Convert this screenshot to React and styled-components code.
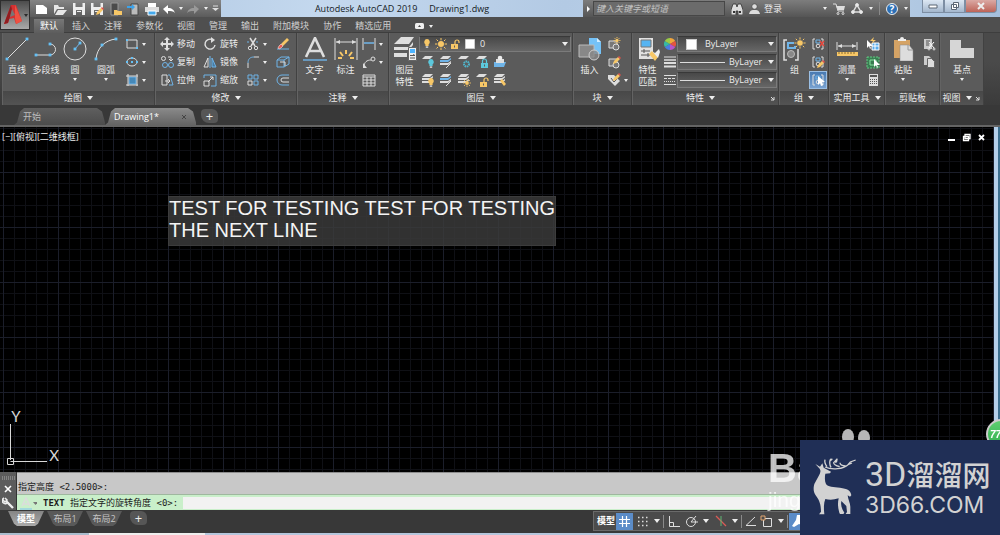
import React from "react";
import styled, { createGlobalStyle, css } from "styled-components";

const GlobalStyle = createGlobalStyle`
  * {
    box-sizing: border-box;
  }

  body {
    margin: 0;
    overflow: hidden;
    background: #383838;
    color: #ececec;
    font: 9px/12px "Open Sans", "Noto Sans CJK SC", sans-serif;
  }

  button,
  input,
  select,
  textarea {
    margin: 0;
    padding: 0;
    border: 0;
    background: none;
    color: inherit;
    font: inherit;
  }

  svg {
    display: block;
    flex: none;
  }
`;

const W = "#dedede";
const B = "#6fb4e8";
const Y = "#f7c767";

const Shell = styled.div`
  display: flex;
  flex-direction: column;
  height: 100vh;
`;

/* ---------- header ---------- */

const Header = styled.header`
  display: flex;
  height: 33px;
  background: #4f4f4f;
  border-bottom: 1px solid #3e3e3e;
`;

const AppButton = styled.button`
  display: flex;
  align-items: center;
  gap: 1px;
  width: 30px;
  height: 30px;
  padding-left: 2px;
  border: 1px solid #2e2e2e;
  background: linear-gradient(#4c4c4c, #a9a9a9);
`;

const HeaderMain = styled.div`
  flex: 1;
  min-width: 0;
`;

const TitleBar = styled.div`
  display: flex;
  height: 17px;
  background: linear-gradient(100deg, #a9c3de, #c4d8ee 30%, #b3cae4 55%, #bfd4ea 80%, #a5bfdc);
`;

const QuickAccess = styled.div`
  display: flex;
  align-items: center;
  justify-content: space-between;
  width: 191px;
  padding: 0 2px 0 5px;
  background: linear-gradient(#858585, #5b5b5b);
`;

const IconButton = styled.button`
  display: flex;
  align-items: center;
  justify-content: center;
  height: 16px;
`;

const Title = styled.h1`
  display: flex;
  flex: 1;
  justify-content: center;
  gap: 12px;
  margin: 0;
  color: #141a24;
  font-size: 9px;
  font-weight: 400;
  line-height: 17px;
  white-space: nowrap;
`;

const InfoCenter = styled.div`
  display: flex;
  align-items: center;
  gap: 6px;
  width: 327px;
  padding-right: 2px;
  background: linear-gradient(#7d7d7d, #555);
`;

const Search = styled.div`
  display: flex;
  align-items: center;
  height: 17px;

  button {
    display: flex;
    justify-content: center;
    width: 10px;
  }

  input {
    width: 132px;
    height: 15px;
    padding-left: 2px;
    background: #6b6b6b;
    border: 1px solid #474747;
    font-style: italic;
  }

  input::placeholder {
    color: #c4c4c4;
    opacity: 1;
  }
`;

const SignIn = styled.button`
  display: flex;
  align-items: center;
  flex: 1;
  gap: 4px;
`;

const Divider = styled.span`
  width: 1px;
  height: 13px;
  background: #8a8a8a;
`;

const WindowButtons = styled.div`
  display: flex;
  width: 90px;
  padding: 0 3px 4px 12px;

  button {
    display: flex;
    align-items: center;
    justify-content: center;
    flex: 2;
    border: 1px solid #7d8ea3;
    border-top: 0;
    background: linear-gradient(#dce7f3, #a4b7cd);
  }

  button:last-child {
    flex: 3;
    border-radius: 0 0 4px 0;
    background: linear-gradient(#dba9a4, #bd6459);
  }
`;

const RibbonTabs = styled.nav`
  display: flex;
  height: 16px;
  padding: 2px 0 0 4px;
`;

const RibbonTab = styled.button`
  height: 14px;
  padding: 0 6px;
  margin-right: 2px;
  color: #d0d0d0;
  line-height: 12px;

  ${props =>
    props.$active &&
    css`
      background: linear-gradient(#777, #5d5d5d);
      color: #fff;
    `}
`;

const TabToggle = styled.button`
  display: flex;
  align-items: center;
  gap: 5px;
  margin-left: 16px;
`;

/* ---------- ribbon ---------- */

const Ribbon = styled.div`
  display: flex;
  height: 72px;
  padding-left: 2px;
  background: linear-gradient(#4a4a4a 40%, #3b3b3b);
`;

const PanelBox = styled.section`
  display: flex;
  flex-direction: column;
  flex: none;
  width: ${props => props.$width}px;
  border-right: 1px solid #414141;
  border-left: 1px solid #636363;
  background: #5b5b5b;
`;

const PanelBody = styled.div`
  display: flex;
  flex: 1;
  padding-top: 2px;
`;

const PanelTitle = styled.button`
  display: flex;
  align-items: center;
  justify-content: center;
  position: relative;
  gap: 5px;
  height: 14px;
  padding-right: ${props => (props.$launch ? 10 : 0)}px;
  background: linear-gradient(#484848, #535353);
  white-space: nowrap;
`;

const Launcher = styled.span`
  position: absolute;
  right: 3px;
`;

const Caret = styled.span`
  flex: none;
  width: 0;
  height: 0;
  border: ${props => props.$size || 2}px solid transparent;
  border-top: ${props => (props.$size || 2) + 1}px solid ${props => (props.$dark ? "#2b2b2b" : "#eee")};
  border-bottom: 0;
`;

const LargeButton = styled.button`
  display: flex;
  flex-direction: column;
  align-items: center;
  width: ${props => props.$width}px;
  height: 54px;
  padding-top: 2px;
  line-height: 12px;
  white-space: nowrap;

  svg {
    margin-bottom: 3px;
  }

  ${Caret} {
    margin-top: 2px;
  }
`;

const Column = styled.div`
  display: flex;
  flex-direction: column;
  flex: none;
  ${props => props.$width && `width: ${props.$width}px;`}
`;

const SmallButton = styled.button`
  display: flex;
  align-items: center;
  gap: 3px;
  height: 18px;
  padding: 0 2px;
  white-space: nowrap;

  ${props =>
    props.$pressed &&
    css`
      background: linear-gradient(#4678b0, #7ba4d2);
      outline: 1px solid #9bbfe4;
      outline-offset: -1px;
    `}
`;

const FieldArea = styled.div`
  display: flex;
  flex-direction: column;
  flex: 1;
  min-width: 0;
`;

const LayerRow = styled.div`
  display: flex;
`;

const Combo = styled.label`
  display: flex;
  align-items: center;
  gap: 4px;
  height: 16px;
  margin: 1px 1px 1px 0;
  padding: 0 2px;
  border: 1px solid #7b7b7b;
  border-top-color: #393939;
  background: linear-gradient(#484848, #666);

  select {
    flex: 1;
    min-width: 0;
    appearance: none;
    line-height: 14px;
  }
`;

const Swatch = styled.span`
  width: 11px;
  height: 11px;
  margin: 0 4px 0 6px;
  border: 1px solid #ccc;
  background: #fff;
`;

const Weight = styled.span`
  width: 45px;
  height: 1px;
  background: #ddd;
`;

/* ---------- file tabs ---------- */

const FileTabs = styled.nav`
  display: flex;
  align-items: flex-end;
  height: 22px;
  padding-left: 14px;
  border-bottom: 2px solid #646464;
  background: #383838;
`;

const FileTab = styled.button`
  display: flex;
  align-items: center;
  justify-content: space-between;
  width: 91px;
  height: 17px;
  padding: 0 9px;
  color: ${props => (props.$active ? "#fff" : "#bdbdbd")};
  background: ${props =>
    props.$active ? "linear-gradient(#8a8a8a, #646464)" : "linear-gradient(#5f5f5f, #4c4c4c)"};
  clip-path: polygon(
    0 100%, 3px 85%, 6px 20%, 10px 0,
    calc(100% - 8px) 0, calc(100% - 3px) 20%, 100% 85%, 100% 100%
  );
`;

const AddTab = styled.button`
  width: 17px;
  height: 14px;
  margin: 0 0 2px 5px;
  border-radius: 4px 6px 4px 8px;
  background: #565656;
  font-size: 13px;
  line-height: 12px;
`;

/* ---------- drawing area ---------- */

const Workspace = styled.main`
  display: flex;
  flex: 1;
  min-height: 0;
`;

const Canvas = styled.div`
  position: relative;
  flex: 1;
  background-color: #000;
  background-image:
    linear-gradient(90deg, #1b1e2a 1px, transparent 1px),
    linear-gradient(#1b1e2a 1px, transparent 1px),
    linear-gradient(90deg, #0f1015 1px, transparent 1px),
    linear-gradient(#0f1015 1px, transparent 1px);
  background-size: 55px 55px, 55px 55px, 11px 11px, 11px 11px;
  background-position: 3px 45px, 3px 45px, 3px 1px, 3px 1px;
`;

const CanvasEdge = styled.div`
  width: 6px;
  border-left: 4px solid #b4cfea;
  background: #3c6f8f;
`;

const ViewLabel = styled.div`
  padding: 4px 2px;
`;

const ViewButtons = styled.div`
  display: flex;
  align-items: center;
  gap: 5px;
  position: absolute;
  top: 6px;
  right: 7px;

  button {
    width: 10px;
  }
`;

const TextEditor = styled.textarea`
  position: absolute;
  left: 168px;
  top: 69px;
  width: 388px;
  height: 50px;
  border: 1px solid #3c3c3c;
  background: rgba(60, 60, 60, 0.82);
  color: #f4f4f4;
  font: 20px/22px "Liberation Sans", sans-serif;
  white-space: pre;
  overflow: hidden;
  resize: none;
`;

const Ucs = styled.svg`
  position: absolute;
  left: 4px;
  bottom: 5px;
`;

/* ---------- command line ---------- */

const CommandLine = styled.section`
  display: flex;
  height: 38px;
  color: #1c1c1c;
  font-family: "DejaVu Sans Mono", "Noto Sans CJK SC", monospace;
`;

const CommandTools = styled.div`
  display: flex;
  flex-direction: column;
  align-items: center;
  justify-content: space-between;
  width: 17px;
  padding: 4px 0 1px;
  border-right: 1px solid #333;
  background: #5c5c5c;
`;

const CommandBody = styled.div`
  flex: 1;
  background: #c8c8c8;
  border-top: 1px solid #8d8d8d;
`;

const History = styled.div`
  height: 21px;
  padding: 8px 1px 0;
`;

const Prompt = styled.label`
  display: flex;
  align-items: center;
  height: 16px;
  border-top: 1px solid #9fb79f;
  background: #c9efca;

  span {
    padding: 0 5px 0 6px;
  }

  input {
    flex: 1;
    height: 12px;
    background: #f2f2f2;
  }
`;

/* ---------- bottom bar ---------- */

const BottomBar = styled.footer`
  display: flex;
  height: 23px;
  padding: 1px 0 0 8px;
  background: #383838;
`;

const LayoutTab = styled.button`
  width: 36px;
  height: 15px;
  margin-right: 3px;
  background: ${props => (props.$active ? "linear-gradient(#858585, #aaa)" : "#595959")};
  color: ${props => (props.$active ? "#fff" : "#c4c4c4")};
  font-weight: ${props => (props.$active ? 700 : 400)};
  line-height: 14px;
  clip-path: polygon(0 0, 100% 0, calc(100% - 6px) 85%, calc(100% - 9px) 100%, 9px 100%, 6px 85%);
`;

const Status = styled.div`
  display: flex;
  align-items: center;
  gap: 1px;
  width: 407px;
  height: 20px;
  margin-left: auto;
  padding-left: 3px;
  border: 1px solid #6a6a6a;
  background: #4b4b4b;
`;

const StatusButton = styled.button`
  display: flex;
  align-items: center;
  justify-content: center;
  width: ${props => props.$width || 17}px;
  height: 17px;
  color: #fff;
  background: ${props => (props.$on ? "#5b8cc8" : "none")};
`;

const Taskbar = styled.div`
  height: 2px;
  background: linear-gradient(90deg, #a9bccd 89px, #eee 89px, #eee 205px, #b4c6dc 205px);
`;

/* ---------- overlays ---------- */

const Watermark = styled.div`
  position: fixed;
  right: 132px;
  bottom: 23px;
  width: 100px;
  color: rgba(255, 255, 255, 0.75);
  font: 700 40px/40px "Liberation Sans", sans-serif;

  small {
    display: block;
    font: 21px/24px "Liberation Sans", sans-serif;
  }
`;

const Paw = styled.svg`
  position: fixed;
  right: 126px;
  bottom: 90px;
`;

const Badge = styled.div`
  position: fixed;
  right: -16px;
  bottom: 86px;
  width: 30px;
  height: 30px;
  padding-left: 2px;
  border: 2px solid #ccc;
  border-radius: 50%;
  background: linear-gradient(#5fcf70, #32b050);
  color: #fff;
  font: italic 700 10px/27px "Liberation Sans", sans-serif;
`;

const Brand = styled.aside`
  display: flex;
  align-items: center;
  position: fixed;
  right: 0;
  bottom: 0;
  width: 200px;
  height: 95px;
  padding-left: 11px;
  background: #202f56;
  color: #d2d2d2;
`;

const BrandText = styled.div`
  display: flex;
  flex-direction: column;
  margin-left: 8px;
  font: 23px/28px Inter, sans-serif;
  white-space: nowrap;
`;

const BrandName = styled.strong`
  font: 500 28px/34px "Noto Sans CJK SC", sans-serif;

  span {
    font: 400 34px/34px Roboto, sans-serif;
  }
`;

/* ---------- icons ---------- */

const Icon = ({ w = 14, h = w, children }) => (
  <svg
    width={w}
    height={h}
    viewBox={`0 0 ${w} ${h}`}
    fill="none"
    stroke={W}
    strokeWidth="1"
    aria-hidden="true"
  >
    {children}
  </svg>
);

const Dots = ({ points, r = 1.4 }) =>
  points.map(([x, y]) => (
    <rect key={`${x}-${y}`} x={x - r} y={y - r} width={r * 2} height={r * 2} fill="#65c0f5" stroke="none" />
  ));

const Pencil = ({ x = 0, y = 0 }) => (
  <g transform={`translate(${x} ${y})`} stroke="none">
    <path d="M1 5l4-4 2 2-4 4-3 1z" fill={Y} />
    <path d="M5 1l1-1 2 2-1 1z" fill="#e25048" />
  </g>
);

const Sun = ({ x, y, r = 2.4 }) => (
  <g transform={`translate(${x} ${y})`} stroke={Y}>
    <circle r={r} fill={Y} stroke="none" />
    <path
      d={`M0 ${-r * 2}V${-r - 0.6}M0 ${r + 0.6}V${r * 2}M${-r * 2} 0H${-r - 0.6}M${r + 0.6} 0H${r * 2}M${-r * 1.5} ${-r * 1.5}L${-r} ${-r}M${r} ${r}L${r * 1.5} ${r * 1.5}M${-r * 1.5} ${r * 1.5}L${-r} ${r}M${r} ${-r}L${r * 1.5} ${-r * 1.5}`}
    />
  </g>
);

const Bulb = ({ x, y, fill = Y }) => (
  <g transform={`translate(${x} ${y})`} stroke="none">
    <path d="M0 0a3 3 0 0 1 1.6 5.4V7h-3.2V5.4A3 3 0 0 1 0 0z" fill={fill} />
    <path d="M-1.2 7.4h2.4v1.4h-2.4z" fill="#ddd" />
  </g>
);

const Lock = ({ x, y, fill = Y, open }) => (
  <g transform={`translate(${x} ${y})`}>
    <path d={open ? "M4 4V2a2 2 0 0 1 4 0v1" : "M1.5 4V2a2 2 0 0 1 4 0v2"} stroke={fill} strokeWidth="1.2" />
    <path d="M0 4h7v5H0zM3 5.5v2h1v-2z" fill={fill} fillRule="evenodd" stroke="none" />
  </g>
);

const Stack = ({ single, mid = W }) => (
  <g stroke="none" fill={W}>
    <path d="M4 1h8L9 4H1z" />
    {!single && (
      <>
        <path d="M1 5h8l3-2v1.4L9 7H1z" fill={mid} />
        <path d="M1 8h8l3-2v1.4L9 10H1z" />
      </>
    )}
  </g>
);

const Floppy = () => (
  <path d="M1 1h12v12H1zM3.5 1v4h7V1zM4 8v5h6V8zM5 9h4v1H5z" fill="#eee" fillRule="evenodd" stroke="none" />
);

const quickIcons = [
  ["新建", <path d="M1 3h7l4 3v6H1z" fill="#fff" stroke="none" />],
  ["打开", <path d="M1 12V3h4l1 2h5v2H4zM2 13l3-5h9l-4 5z" fill="#e6e6e6" stroke="none" />],
  ["保存", <Floppy />],
  ["另存为", <><Floppy /><Pencil x={6} y={5} /></>],
  ["从移动设备打开", <><path d="M3 1h7v12H3z" fill="#4b4b4b" stroke="#999" /><path d="M6 8h3l1 1h4v4H6z" fill={Y} stroke="none" /></>],
  ["保存到移动设备", <><path d="M5 2h7v11H5z" fill="#bbb" stroke="#444" /><path d="M1 4h5V2l3 3-3 3V6H1z" fill="#3ba2ea" stroke="none" /></>],
  ["打印", <><path d="M3 1h8v4H3z" fill="#fff" stroke="none" /><path d="M0 5h14v5H0z" fill="#ddd" stroke="none" /><path d="M3 9h8v4H3z" fill="#45a9ec" stroke="#fff" /></>],
];

const tabs = ["默认", "插入", "注释", "参数化", "视图", "管理", "输出", "附加模块", "协作", "精选应用"];

const Line = () => (
  <Icon w={24}>
    <path d="M2 22L22 2" />
    <Dots points={[[2, 22], [22, 2]]} />
  </Icon>
);

const Polyline = () => (
  <Icon w={24}>
    <path d="M2 18h14a5 5 0 0 0 0-11" />
    <Dots points={[[2, 18], [16, 18], [16, 7]]} />
  </Icon>
);

const Circle = () => (
  <Icon w={24}>
    <circle cx="12" cy="12" r="11" />
    <path d="M12 12l5-6" stroke={B} />
    <Dots points={[[12, 12], [17, 6]]} />
  </Icon>
);

const Arc = () => (
  <Icon w={24}>
    <path d="M2 22C3 11 11 3 22 2" />
    <Dots points={[[2, 22], [8, 8], [22, 2]]} />
  </Icon>
);

const modifyTools = [
  [
    ["移动", <path d="M7 0l3 3H8v3h3V4l3 3-3 3V8H8v3h2l-3 3-3-3h2V8H3v2L0 7l3-3v2h3V3H4z" fill={W} stroke="none" />],
    ["复制", <><circle cx="3.5" cy="3.5" r="2" /><path d="M8 2h3v4M9 4l2 2 2-2" /><circle cx="5" cy="10" r="2.5" stroke={B} /><circle cx="11" cy="10" r="2.5" stroke={B} /></>],
    ["拉伸", <><path d="M2 2h5v10H2zM5 8h5M8 6l2 2-2 2" /><path d="M8 2h2l3 10H9" stroke={B} /></>],
  ],
  [
    ["旋转", <><path d="M9 2.5A5 5 0 1 0 12 8" strokeWidth="1.4" /><path d="M8 0l4 3-4 3z" fill={W} stroke="none" /></>],
    ["镜像", <><path d="M5 3v9H1z" /><path d="M9 3v9h4z" fill="#477aa1" stroke={B} /><path d="M7 1v12" stroke={B} /></>],
    ["缩放", <><path d="M1 8h5v5H1z" /><path d="M1 5V2h12v11H8" stroke={B} /><path d="M5 9l5-5M7 4h3v3" /></>],
  ],
];

const modifyCarets = [
  ["修剪", <><path d="M1 5h3M10 5h3" stroke={B} strokeDasharray="2 1" /><path d="M4 1l5 8M10 1L5 9" strokeWidth="1.5" /><circle cx="4" cy="11" r="1.7" /><circle cx="10" cy="11" r="1.7" /></>],
  ["圆角", <><path d="M2 13V8" /><path d="M2 8c0-4 2-6 6-6" stroke={B} /><path d="M8 2h5" /></>],
  ["阵列", <><path d="M2 2h4v4H2zM8 2h4v4H8zM8 8h4v4H8z" stroke={B} /><path d="M2 8h4v4H2z" /></>],
];

const modifyPlain = [
  ["删除", <><path d="M1 12h12" stroke={B} /><path d="M5 7l6-6 2 2-6 6z" fill={Y} stroke="none" /><path d="M3 9l2-2 2 2-2 2-2 1-1-1z" fill="#ec5c50" stroke="#fff" strokeWidth=".5" /></>],
  ["分解", <><path d="M1 5h7v7H1zM1 5l4-3h8v7l-5 3M8 5l5-3" stroke={B} /><path d="M4 7h5v4" /></>],
  ["偏移", <><path d="M13 2H6a5 5 0 0 0 0 10h7" stroke={B} /><path d="M13 5H7a2 2 0 0 0 0 4h6" /></>],
];

const Launch = () => (
  <Launcher>
    <Icon w={5}>
      <path d="M1 1l3 3M4 1v3H1" />
    </Icon>
  </Launcher>
);

const Panel = ({ title, width, caret = true, launch, children }) => (
  <PanelBox $width={width}>
    <PanelBody>{children}</PanelBody>
    <PanelTitle $launch={launch}>
      {title}
      {caret && <Caret $size={3} />}
      {launch && <Launch />}
    </PanelTitle>
  </PanelBox>
);

const Tools = ({ items, labels, carets, width }) => (
  <Column $width={width}>
    {items.map(([name, icon, pressed], i) => (
      <SmallButton key={name} aria-label={name} $pressed={pressed}>
        <Icon>{icon}</Icon>
        {labels && name}
        {carets && carets.includes(i) && <Caret />}
      </SmallButton>
    ))}
  </Column>
);

const DrawPanel = () => (
  <Panel title="绘图" width={153}>
    <LargeButton $width={28}><Line />直线</LargeButton>
    <LargeButton $width={30}><Polyline />多段线</LargeButton>
    <LargeButton $width={28}><Circle />圆<Caret /></LargeButton>
    <LargeButton $width={34}><Arc />圆弧<Caret /></LargeButton>
    <Tools
      carets={[0, 1, 2]}
      items={[
        ["矩形", <><path d="M2 3h10v8H2z" /><Dots r={1} points={[[2, 3], [12, 11]]} /></>],
        ["椭圆", <><ellipse cx="7" cy="7" rx="5" ry="4" /><Dots r={1} points={[[7, 7], [2, 7], [12, 7], [7, 3]]} /></>],
        ["图案填充", <><path d="M4 4h7v7H4z" fill="#4689b9" stroke={B} /><path d="M3 1v12M12 1v12M1 3h12M1 12h12" /></>],
      ]}
    />
  </Panel>
);

const ModifyPanel = () => (
  <Panel title="修改" width={142}>
    <Column $width={2} />
    <Tools labels width={43} items={modifyTools[0]} />
    <Tools labels width={43} items={modifyTools[1]} />
    <Tools carets={[0, 1, 2]} width={30} items={modifyCarets} />
    <Tools items={modifyPlain} />
  </Panel>
);

const AnnotatePanel = () => (
  <Panel title="注释" width={92}>
    <LargeButton $width={33}>
      <Icon w={24}>
        <path d="M0 23h24" stroke={B} strokeWidth="1.4" />
        <path d="M3 20L12 1l9 19M6 14h12" strokeWidth="2.6" />
      </Icon>
      文字
      <Caret />
    </LargeButton>
    <LargeButton $width={29}>
      <Icon w={24}>
        <path d="M1 1v22M23 1v22M2 5h20" />
        <path d="M2 5l4-2v4zM22 5l-4-2v4z" fill={W} stroke="none" />
        <path d="M12 13v4M6 15l3 4M18 15l-3 4M4 21h4M16 21h4" stroke={Y} strokeWidth="2" />
      </Icon>
      标注
    </LargeButton>
    <Tools
      carets={[0, 1]}
      items={[
        ["线性", <><path d="M1 1v12M13 1v12" /><path d="M2 6h10" stroke={B} strokeWidth="1.5" /></>],
        ["引线", <><path d="M2 12c0-5 3-7 7-7" /><circle cx="11" cy="4" r="2" /><path d="M1 8v5h4z" fill={W} stroke="none" /></>],
        ["表格", <path d="M1 2h12v11H1zM1 4h12M1 7h12M1 10h12M5 4v9M9 4v9" />],
      ]}
    />
  </Panel>
);

const layerTop = [
  ["关", <><Stack single /><Bulb x={10} y={4} fill="#5cc8dc" /></>],
  ["隔离", <><Stack mid={B} /><path d="M7 13l5-5" /></>],
  ["冻结", <><Stack single /><circle cx="9.5" cy="9" r="2.5" stroke="#4fb6cd" strokeWidth="2" strokeDasharray="1.5 .6" /></>],
  ["锁定", <><Stack single /><Lock x={6} y={4} fill="#5cc8dc" /></>],
  ["置为当前", <><path d="M1 7h12l-2 5H1z" fill={B} stroke="none" /><path d="M3 4h8v4H3z" fill={W} stroke="none" /><circle cx="7" cy="3" r="2.3" fill="#eee" stroke="none" /></>],
];

const layerBottom = [
  ["打开所有图层", <><Stack /><Bulb x={10} y={5} /></>],
  ["取消隔离", <><Stack mid={B} /><path d="M7 13l5-5" /></>],
  ["解冻所有图层", <><Stack /><Sun x={10} y={10} r={1.9} /></>],
  ["解锁", <><Stack single /><Lock x={5} y={5} open /></>],
  ["匹配图层", <><Stack /><path d="M7 8l2-2 4 5-2 2z" fill={Y} stroke="none" /></>],
];

const LayersPanel = () => (
  <Panel title="图层" width={184}>
    <LargeButton $width={29}>
      <Icon w={24}>
        <g stroke="none" fill={W}>
          <path d="M8 0h13l-5 7H1z" />
          <path d="M1 10h15l4-5v3l-4 5H1z" />
          <path d="M1 16h13v4H1z" />
        </g>
        <path d="M15.5 10.5h8v13h-8z" fill="#eee" stroke="#666" />
        <path d="M17 12h5v4h-5z" fill="#4db4ff" stroke="none" />
        <path d="M17 18.5h5M20 17.5l2 1M17 21h5" stroke="#555" />
      </Icon>
      <span>图层</span>
      <span>特性</span>
    </LargeButton>
    <FieldArea>
      <Combo>
        <Icon w={54} h={14}>
          <Bulb x={5} y={2} />
          <Sun x={19} y={7} r={3} />
          <Lock x={29} y={3} open />
          <path d="M43.5 2.5h9v9h-9z" fill="#fff" stroke="#ccc" />
        </Icon>
        <select aria-label="图层" defaultValue="0">
          <option>0</option>
        </select>
        <Caret $size={3} />
      </Combo>
      <LayerRow>
        {layerTop.map(([name, icon]) => (
          <SmallButton key={name} aria-label={name}><Icon>{icon}</Icon></SmallButton>
        ))}
      </LayerRow>
      <LayerRow>
        {layerBottom.map(([name, icon]) => (
          <SmallButton key={name} aria-label={name}><Icon>{icon}</Icon></SmallButton>
        ))}
      </LayerRow>
    </FieldArea>
  </Panel>
);

const BlockPanel = () => (
  <Panel title="块" width={59}>
    <LargeButton $width={31}>
      <Icon w={24}>
        <path d="M11 1h8l4 4v12H11z" fill="#75c2f7" stroke="none" />
        <path d="M19 1v4h4z" fill="#d3edff" stroke="none" />
        <path d="M1 8h15v12H1z" fill="#888" stroke="#bbb" />
        <circle cx="16" cy="18" r="5" fill="#888" fillOpacity=".8" stroke="#ccc" />
      </Icon>
      插入
    </LargeButton>
    <Tools
      carets={[2]}
      items={[
        ["创建", <><path d="M2 4h8v7H2z" fill="#777" /><circle cx="9" cy="10" r="3" fill="#777" /><Sun x={10} y={3.5} r={1.7} /></>],
        ["编辑", <><path d="M2 4h8v7H2z" fill="#777" /><circle cx="9" cy="10" r="3" fill="#777" /><Pencil x={6} y={1} /></>],
        ["编辑属性", <><path d="M1 2h6l6 6-5 5-7-7z" fill="#ddd" stroke="none" /><path d="M4 5l3 4 3-3" stroke="#555" /><Pencil x={6} y={0} /></>],
      ]}
    />
  </Panel>
);

const PropertiesPanel = () => (
  <Panel title="特性" width={147} launch>
    <LargeButton $width={29}>
      <Icon w={24}>
        <path d="M3 1h14v21H3z" fill="#e1e1e1" stroke="none" />
        <path d="M5 3h10v7H5z" fill="#55b4f2" stroke="#777" />
        <path d="M5 14h9M5 18h9M8 12v4M12 16v4" stroke="#555" />
        <path d="M13 17l3-3 6 6-3 4z" fill={Y} stroke="none" />
        <path d="M16 14l3 2 4-4 1 3-2 6z" fill="#eee" stroke="none" />
      </Icon>
      <span>特性</span>
      <span>匹配</span>
    </LargeButton>
    <Column $width={15}>
      <SmallButton aria-label="颜色">
        <Icon w={12}>
          <g stroke="none">
            <path d="M6 6V0a6 6 0 0 1 5.2 3z" fill="#f2a53b" />
            <path d="M6 6l5.2-3a6 6 0 0 1 0 6z" fill="#e6543f" />
            <path d="M6 6l5.2 3A6 6 0 0 1 6 12z" fill="#b854c9" />
            <path d="M6 6v6A6 6 0 0 1 .8 9z" fill="#4a7de2" />
            <path d="M6 6L.8 9a6 6 0 0 1 0-6z" fill="#36b9a3" />
            <path d="M6 6L.8 3A6 6 0 0 1 6 0z" fill="#9bcb45" />
          </g>
        </Icon>
      </SmallButton>
      <SmallButton aria-label="线宽列表">
        <Icon w={12}><path d="M0 1h12" /><path d="M0 4h12" strokeWidth="1.5" /><path d="M0 7h12M0 10.5h12" strokeWidth="2" /></Icon>
      </SmallButton>
      <SmallButton aria-label="线型列表">
        <Icon w={12}><path d="M0 1.5h12M0 10.5h12" /><path d="M0 4.5h12" strokeDasharray="3 1" /><path d="M0 7.5h12" strokeDasharray="1 1" /></Icon>
      </SmallButton>
    </Column>
    <FieldArea>
      <Combo>
        <Swatch />
        <select aria-label="对象颜色" defaultValue="ByLayer"><option>ByLayer</option></select>
        <Caret $size={3} />
      </Combo>
      <Combo>
        <Weight />
        <select aria-label="线宽" defaultValue="ByLayer"><option>ByLayer</option></select>
        <Caret $size={3} />
      </Combo>
      <Combo>
        <Weight />
        <select aria-label="线型" defaultValue="ByLayer"><option>ByLayer</option></select>
        <Caret $size={3} />
      </Combo>
    </FieldArea>
  </Panel>
);

const GroupMark = () => (
  <>
    <path d="M4 2H2v10h2M10 2h2v10h-2" />
    <path d="M5 3h4v3H5z" stroke={B} />
    <circle cx="7" cy="9" r="1.8" />
  </>
);

const GroupPanel = () => (
  <Panel title="组" width={50}>
    <LargeButton $width={29}>
      <Icon w={24}>
        <path d="M4 3H1v20h3M12 23h3V12" strokeWidth="1.5" />
        <path d="M11 6H5v5h7V9" stroke={B} strokeWidth="2" />
        <circle cx="8" cy="17" r="3.5" fill="#888" stroke="#bbb" />
        <Sun x={17} y={6} r={2.8} />
      </Icon>
      组
    </LargeButton>
    <Tools
      items={[
        ["解除编组", <><GroupMark /><path d="M9 4l4 5M13 4l-4 5" stroke="#e3483d" strokeWidth="1.5" /></>],
        ["组编辑", <><GroupMark /><Pencil x={6} y={5} /></>],
        ["启用组选择", <><GroupMark /><path d="M7 3v9l2-2 1 3 2-1-1-3h3z" fill="#fff" stroke="none" /></>, true],
      ]}
    />
  </Panel>
);

const UtilitiesPanel = () => (
  <Panel title="实用工具" width={56}>
    <LargeButton $width={34}>
      <Icon w={24}>
        <path d="M2 5v8M22 5v8M3 9h18" />
        <path d="M3 9l4-2v4zM21 9l-4-2v4z" fill={W} stroke="none" />
        <path d="M2 15h21v4H2z" fill={Y} stroke="none" />
        <path d="M4 15v2M7 15v2M10 15v2M13 15v2M16 15v2M19 15v2" stroke="#8b6c2e" />
      </Icon>
      测量
      <Caret />
    </LargeButton>
    <Tools
      items={[
        ["快速选择", <><path d="M1 3v8l2-2 1 3 1-1-1-2h3z" fill="#fff" stroke="none" /><path d="M6 6h7v7H6zM9 6v7M6 9h7" fill="#58acea" stroke="#fff" /><path d="M8 0L4 4h3L5 7l5-4H7z" fill={Y} stroke="none" /></>],
        ["全部选择", <><path d="M1 2h12v11H1z" fill="#397d51" stroke="#63cb83" strokeDasharray="2 1" /><path d="M4 5h6v5H4z" stroke="#84e29e" /><path d="M8 4v8l2-2 1 3 1-1-1-2h3z" fill="#fff" stroke="none" /></>],
        ["快速计算器", <><path d="M3 1h9v12H3z" fill="#ddd" stroke="none" /><path d="M4 3h7" stroke="#555" strokeWidth="2" /><path d="M4 6.5h7M4 8.5h7M4 10.5h7" stroke="#555" strokeDasharray="1 1" /></>],
      ]}
    />
  </Panel>
);

const ClipboardPanel = () => (
  <Panel title="剪贴板" width={55} caret={false}>
    <LargeButton $width={34}>
      <Icon w={24}>
        <path d="M3 3h16v18H3z" fill="#d5a365" stroke="none" />
        <path d="M7 4V2h2a2 2 0 0 1 4 0h2v2z" fill="#eee" stroke="none" />
        <path d="M9 8h9l4 5v11H9z" fill="#ddd" stroke="#888" strokeWidth=".5" />
        <path d="M17 8v5h5" stroke="#999" />
      </Icon>
      粘贴
      <Caret />
    </LargeButton>
    <Tools
      items={[
        ["剪切", <><path d="M2 2h8v10H2z" fill="#ccc" stroke="none" /><path d="M4 4h4M4 6h4M4 8h3" stroke="#555" /><path d="M7 5l5 6M12 5l-5 6" stroke="#fff" /><circle cx="7" cy="12" r="1" /><circle cx="12" cy="12" r="1" /></>],
        ["复制剪裁", <><path d="M2 1h5l2 2v7H2z" fill="#ccc" stroke="none" /><path d="M5.5 3.5h4l3 3v6h-7z" fill="#ddd" stroke="#666" /></>],
      ]}
    />
  </Panel>
);

const ViewPanel = () => (
  <Panel title="视图" width={44} launch>
    <LargeButton $width={42}>
      <Icon w={24}><path d="M0 3h11v8h13v10H0z" fill="#d6d6d6" stroke="none" /></Icon>
      基点
      <Caret />
    </LargeButton>
  </Panel>
);

const Deer = () => (
  <svg width="46" height="62" viewBox="152 174 138 186" fill="#d2d2d2" aria-hidden="true">
    <path d="M165 195l14 8 7-10 4 13 22 12-3 5-14 1c-2 10-2 22 2 31 5 9 23 9 42 11 22 3 32 8 34 23l-4 4-7-4c1 12 8 24 8 34v22h-14l4-6-2-18-15-15c-2 10 0 22 9 35l-3 4h-10l-2-4c-5-18-5-29-2-43-15 5-29 5-40 2-5 12-5 28-3 46h-16l6-8c0-22-5-35-15-48-7-8-9-22-5-35l13-24c6-10 7-17 3-22z" />
    <g fill="none" stroke="#d2d2d2" strokeWidth="4">
      <path d="M194 204c22 10 55 6 69-7l7-8 16-6M263 197l12-5M256 201c-10-1-17-4-17-10M238 203c-11-3-18-8-18-12l11-12M225 191c6-3 5-8 5-12M212 205c-4-7-6-15-1-26M207 188l9-9M200 203c-6-8-8-14-6-21" />
    </g>
  </svg>
);

const App = () => (
  <>
    <GlobalStyle />
    <Shell>
      <Header>
        <AppButton aria-label="应用程序菜单">
          <Icon w={20} h={22}>
            <g stroke="none">
              <path d="M1 20L8 1h5l6 16-6 3-2-6-5 1-1 4z" fill="#d43131" />
              <path d="M1 20L8 1l1 5-4 13z" fill="#901d20" />
              <path d="M9 5l3 6-5 2z" fill="#777" />
              <path d="M12 1l7 16-6 3-1-6z" fill="#ee5142" />
            </g>
          </Icon>
          <Caret $dark />
        </AppButton>
        <HeaderMain>
          <TitleBar>
            <QuickAccess>
              {quickIcons.map(([name, icon]) => (
                <IconButton key={name} aria-label={name}><Icon>{icon}</Icon></IconButton>
              ))}
              <IconButton aria-label="放弃"><Icon w={12}><path d="M0 6l5-4v3c4 0 6 2 7 5-2-2-4-2-7-2v3z" fill="#fff" stroke="none" /></Icon></IconButton>
              <Caret />
              <IconButton aria-label="重做"><Icon w={12}><path d="M12 6L7 2v3C3 5 1 7 0 10c2-2 4-2 7-2v3z" fill="#999" stroke="none" /></Icon></IconButton>
              <Caret />
              <IconButton aria-label="自定义快速访问工具栏"><Icon w={7}><path d="M1 1h5" /><path d="M0 3h7L3.5 6z" fill={W} stroke="none" /></Icon></IconButton>
            </QuickAccess>
            <Title>
              <span>Autodesk AutoCAD 2019</span>
              <span>Drawing1.dwg</span>
            </Title>
            <InfoCenter>
              <Search>
                <button aria-label="展开搜索"><Icon w={5} h={6}><path d="M1 0l3 3-3 3z" fill="#fff" stroke="none" /></Icon></button>
                <input aria-label="搜索" placeholder="键入关键字或短语" />
              </Search>
              <IconButton aria-label="查找">
                <Icon w={12}><path d="M2 1h3l1 3 1-3h3l2 6v5H7V8H5v4H0V7z" fill="#ddd" stroke="#333" strokeWidth=".8" /><path d="M2 9h2M8 9h2" stroke="#333" strokeWidth="2" /></Icon>
              </IconButton>
              <SignIn>
                <Icon w={11}><circle cx="5.5" cy="3.5" r="2.7" fill="#ddd" stroke="#333" strokeWidth=".6" /><path d="M0 11c1-4 3-4 5.5-4S10 7 11 11z" fill="#ddd" stroke="none" /></Icon>
                登录
              </SignIn>
              <Caret />
              <IconButton aria-label="应用商店"><Icon w={12}><path d="M0 1h3l2 7h6" /><path d="M3 3h9l-1 4H5z" fill={W} stroke="none" /><circle cx="5" cy="10.5" r="1" /><circle cx="10" cy="10.5" r="1" /></Icon></IconButton>
              <IconButton aria-label="保持连接"><Icon w={12}><path d="M6 2l4 7H2z" strokeWidth="1.5" /><circle cx="6" cy="2" r="1.5" fill="#eee" /><circle cx="2" cy="9" r="1.5" fill="#eee" /><circle cx="10" cy="9" r="1.5" fill="#eee" /></Icon></IconButton>
              <Caret />
              <Divider />
              <IconButton aria-label="帮助">
                <svg width="12" height="12" viewBox="0 0 12 12"><circle cx="6" cy="6" r="5.5" fill="#2c70b7" stroke="#eee" /><text x="6" y="9.5" fill="#fff" textAnchor="middle" fontSize="10" fontWeight="700">?</text></svg>
              </IconButton>
              <Caret />
            </InfoCenter>
            <WindowButtons>
              <button aria-label="最小化"><Icon w={10} h={5}><path d="M1 1h8v3H1z" fill="#fff" stroke="#5b6675" /></Icon></button>
              <button aria-label="还原"><Icon w={10}><path d="M3.5 1.5h5v5h-5zM1.5 3.5h5v5h-5z" fill="#fff" stroke="#5b6675" /></Icon></button>
              <button aria-label="关闭"><Icon w={8}><path d="M1 1l6 6M7 1L1 7" stroke="#eee" strokeWidth="2" /></Icon></button>
            </WindowButtons>
          </TitleBar>
          <RibbonTabs>
            {tabs.map((tab, i) => (
              <RibbonTab key={tab} $active={i === 0}>{tab}</RibbonTab>
            ))}
            <TabToggle aria-label="最小化功能区">
              <Icon w={9} h={6}><rect width="9" height="6" rx="1.5" fill="#eee" stroke="none" /><path d="M3 4l1.5-2L6 4z" fill="#444" stroke="none" /></Icon>
              <Caret />
            </TabToggle>
          </RibbonTabs>
        </HeaderMain>
      </Header>

      <Ribbon>
        <DrawPanel />
        <ModifyPanel />
        <AnnotatePanel />
        <LayersPanel />
        <BlockPanel />
        <PropertiesPanel />
        <GroupPanel />
        <UtilitiesPanel />
        <ClipboardPanel />
        <ViewPanel />
      </Ribbon>

      <FileTabs>
        <FileTab>开始</FileTab>
        <FileTab $active>
          Drawing1*
          <Icon w={6}><path d="M1 1l4 4M5 1L1 5" stroke="#444" /></Icon>
        </FileTab>
        <AddTab aria-label="新图形">+</AddTab>
      </FileTabs>

      <Workspace>
        <Canvas>
          <ViewLabel>[−][俯视][二维线框]</ViewLabel>
          <ViewButtons>
            <button aria-label="最小化视口"><Icon w={9}><path d="M1 7h7" stroke="#fff" strokeWidth="2" /></Icon></button>
            <button aria-label="还原视口"><Icon w={9}><path d="M3 1.5h5v4H3zM1.5 3.5h5v4h-5z" fill="#000" stroke="#fff" strokeWidth="1.3" /></Icon></button>
            <button aria-label="关闭视口"><Icon w={9}><path d="M2 2l5 5M7 2L2 7" stroke="#fff" strokeWidth="1.8" /></Icon></button>
          </ViewButtons>
          <TextEditor
            aria-label="文字"
            spellCheck={false}
            defaultValue={"TEST FOR TESTING TEST FOR TESTING\nTHE NEXT LINE"}
          />
          <Ucs width="60" height="60" fill="none" stroke="#d8d8d8">
            <path d="M6.5 17v36M6.5 54.5H43M3.5 51.5h6v6h-6z" />
            <g fill="#d8d8d8" stroke="none" fontFamily="Lato, sans-serif" fontSize="15" textAnchor="middle">
              <text x="12" y="15">Y</text>
              <text x="50" y="54">X</text>
            </g>
          </Ucs>
        </Canvas>
        <CanvasEdge />
      </Workspace>

      <CommandLine>
        <CommandTools>
          <Icon w={13} h={5}><path d="M0 1h13M0 3h13" stroke="#aaa" strokeDasharray="1 1" /></Icon>
          <Icon w={8}><path d="M1 1l6 6M7 1L1 7" stroke="#fff" strokeWidth="1.6" /></Icon>
          <Icon w={12}><path d="M4 4l7 7" stroke="#eee" strokeWidth="2.4" /><path d="M2 1a3 3 0 1 0 4 4M1 3l2 2 2-2-2-2" stroke="#eee" strokeWidth="1.5" /></Icon>
        </CommandTools>
        <CommandBody>
          <History>指定高度 &lt;2.5000&gt;:</History>
          <Prompt>
            <Icon w={20} h={14}><path d="M5 10l4-8 4 8M6 8h6" stroke="#dcdcdc" strokeWidth="1.5" /><path d="M3 13h12" stroke="#7cc4ef" /><path d="M16 6h5l-2.5 3z" fill="#777" stroke="none" /></Icon>
            <span><b>TEXT</b> 指定文字的旋转角度 &lt;0&gt;:</span>
            <input aria-label="命令" />
          </Prompt>
        </CommandBody>
      </CommandLine>

      <BottomBar>
        <LayoutTab $active>模型</LayoutTab>
        <LayoutTab>布局1</LayoutTab>
        <LayoutTab>布局2</LayoutTab>
        <AddTab aria-label="新建布局">+</AddTab>
        <Status>
          <StatusButton $width={18}><b>模型</b></StatusButton>
          <StatusButton $on aria-label="栅格"><Icon w={13}><path d="M4.5 1v11M8.5 1v11M1 4.5h11M1 8.5h11" stroke="#fff" strokeWidth="1.2" /></Icon></StatusButton>
          <StatusButton aria-label="捕捉"><Icon w={11}><path d="M1 1.5h10M1 5.5h10M1 9.5h10" strokeWidth="1.5" strokeDasharray="1.5 2.5" /></Icon></StatusButton>
          <StatusButton $width={10} aria-label="捕捉设置"><Caret $size={3} /></StatusButton>
          <Divider />
          <StatusButton aria-label="正交"><Icon w={12}><path d="M1.5 1v10.5H12M1.5 7.5h4v4" /></Icon></StatusButton>
          <StatusButton aria-label="极轴"><Icon w={13}><circle cx="6" cy="7" r="4.5" /><path d="M6 7h7M6 7l5-6" /></Icon></StatusButton>
          <StatusButton $width={10} aria-label="极轴设置"><Caret $size={3} /></StatusButton>
          <StatusButton aria-label="等轴测"><Icon w={12}><path d="M1 1l10 10" stroke="#dc5a56" strokeWidth="1.3" /><path d="M6 1v10" stroke="#60b774" /></Icon></StatusButton>
          <StatusButton $width={10} aria-label="等轴测设置"><Caret $size={3} /></StatusButton>
          <Divider />
          <StatusButton $width={14} aria-label="对象捕捉追踪"><Icon w={12}><path d="M11 2l-9 8.5h10" /></Icon></StatusButton>
          <StatusButton aria-label="对象捕捉"><Icon w={13}><path d="M3.5 3.5h8v8h-8z" /><path d="M1 1h4v4H1z" fill="#4b4b4b" stroke="#e2a671" /></Icon></StatusButton>
          <StatusButton $width={10} aria-label="对象捕捉设置"><Caret $size={3} /></StatusButton>
          <Divider />
          <StatusButton $on aria-label="注释可见性"><Icon w={14}><path d="M6 1h3v5l4 6-5-2-5 3-2-1 4-6z" fill="#fff" stroke="none" /></Icon></StatusButton>
        </Status>
      </BottomBar>
      <Taskbar />
    </Shell>

    <Badge>77</Badge>
    <Paw width="32" height="18" fill="#b6b6b6" viewBox="0 0 32 18">
      <ellipse cx="6" cy="10" rx="6" ry="8" />
      <ellipse cx="22" cy="11" rx="6" ry="8" />
    </Paw>
    <Watermark>Ba<small>jing</small></Watermark>
    <Brand>
      <Deer />
      <BrandText>
        <BrandName><span>3D</span>溜溜网</BrandName>
        3D66.COM
      </BrandText>
    </Brand>
  </>
);

export default App;
